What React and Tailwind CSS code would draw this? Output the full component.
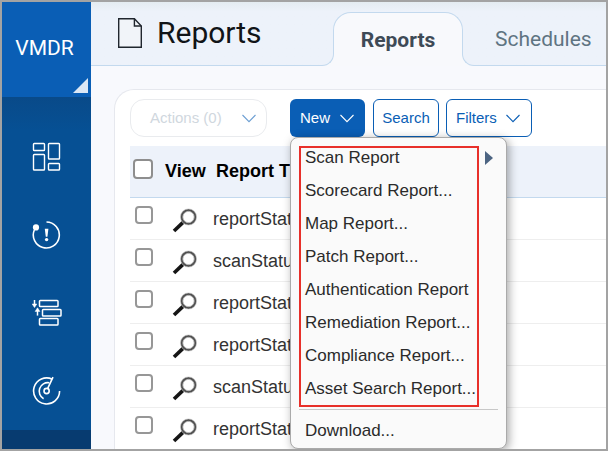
import React from "react";

const sans = "font-['Liberation_Sans',Arial,sans-serif]";

const menuItems = [
  "Scan Report",
  "Scorecard Report...",
  "Map Report...",
  "Patch Report...",
  "Authentication Report",
  "Remediation Report...",
  "Compliance Report...",
  "Asset Search Report...",
];

const rows = [
  "reportStatus",
  "scanStatus",
  "reportStatus",
  "reportStatus",
  "scanStatus",
  "reportStatus",
];

function Chevron({ className }) {
  return (
    <svg className={className} width="14" height="9" viewBox="0 0 14 9" fill="none" stroke="currentColor" strokeWidth="1.1">
      <path d="M0.5 1 L7 7.6 L13.5 1" />
    </svg>
  );
}

function DashboardIcon() {
  return (
    <svg width="30" height="30" viewBox="0 0 30 30" fill="none" stroke="white" strokeWidth="1.4">
      <rect x="1.5" y="1.5" width="11" height="7" rx="0.8" />
      <rect x="1.5" y="12.5" width="11" height="15.5" rx="0.8" />
      <rect x="16.5" y="1.5" width="11" height="15.5" rx="0.8" />
      <rect x="16.5" y="21.5" width="11" height="6.5" rx="0.8" />
    </svg>
  );
}

function AlertIcon() {
  return (
    <svg width="30" height="30" viewBox="0 0 30 30" fill="none" stroke="white" strokeWidth="1.6">
      <path d="M14.5 2 A13 13 0 1 1 2.3 10" />
      <circle cx="4" cy="7.4" r="3.1" fill="white" stroke="none" />
      <path d="M12.8 8.8 H16.4 L15.4 16.8 H13.8 Z" fill="white" stroke="none" />
      <circle cx="14.6" cy="19.6" r="1.7" fill="white" stroke="none" />
    </svg>
  );
}

function PriorityIcon() {
  return (
    <svg width="30" height="30" viewBox="0 0 30 30" fill="none" stroke="white" strokeWidth="1.5">
      <rect x="7.5" y="2.5" width="18.5" height="6" rx="0.8" />
      <rect x="10.5" y="11.5" width="18.5" height="6.5" rx="0.8" />
      <rect x="7.5" y="20.5" width="18.5" height="6.5" rx="0.8" />
      <path d="M2.5 2 V7" />
      <path d="M0.2 6 H4.8 L2.5 9.6 Z" fill="white" stroke="white" strokeWidth="0.5" />
      <path d="M5.5 17.6 V13" />
      <path d="M3.1 13.4 H7.9 L5.5 9.8 Z" fill="white" stroke="white" strokeWidth="0.5" />
    </svg>
  );
}

function GaugeIcon() {
  return (
    <svg width="30" height="30" viewBox="0 0 30 30" fill="none" stroke="white" strokeWidth="1.6">
      <path d="M20.2 3.2 A13 13 0 1 0 27.6 15" />
      <path d="M17.2 6.8 A8.6 8.6 0 0 0 11.6 22.8" />
      <circle cx="14.6" cy="15" r="2.6" />
      <path d="M15.6 12.6 L21 1.2" />
    </svg>
  );
}

function Magnifier() {
  return (
    <svg width="26" height="26" viewBox="0 0 26 26" fill="none">
      <path d="M2 24 L11 15.4" stroke="#151515" strokeWidth="3.6" />
      <circle cx="16.5" cy="10" r="6.8" stroke="#505050" strokeWidth="2.4" />
      <circle cx="16.5" cy="10" r="5.6" stroke="#c4c4c4" strokeWidth="0.9" />
      <circle cx="16.5" cy="10" r="8.1" stroke="#c4c4c4" strokeWidth="0.6" />
    </svg>
  );
}

const navItems = [
  ["Dashboard", DashboardIcon],
  ["Vulnerabilities", AlertIcon],
  ["Prioritization", PriorityIcon],
  ["Scans", GaugeIcon],
];

function Sidebar() {
  return (
    <aside className="flex w-[89px] shrink-0 flex-col bg-[#065094]">
      <button className="flex h-[95px] shrink-0 flex-col items-end justify-end bg-[#0a5eb5] text-white">
        <span className="w-full flex-1 pt-8 pr-1 text-center font-[Roboto,sans-serif] text-[21px] leading-[28px]">VMDR</span>
        <svg className="mr-[3px] mb-1" width="15" height="15" viewBox="0 0 15 15">
          <path d="M15 0 V15 H0 Z" fill="#dbe7f5" />
        </svg>
      </button>
      <nav className="flex flex-col bg-linear-to-b from-[#094a89] to-[#065094] to-10% pt-[21px]">
        {navItems.map(([label, Icon]) => (
          <button key={label} aria-label={label} className="flex h-[78px] items-center justify-center">
            <Icon />
          </button>
        ))}
      </nav>
      <div className="flex-1 bg-[#073b70]" />
    </aside>
  );
}

function Header() {
  return (
    <header className="flex h-16 shrink-0 items-end border-b border-[#c3d9ee] bg-linear-to-b from-[#e4ecf1] to-[#edf2fa] to-15%">
      <div className="flex w-[242px] shrink-0 items-center gap-[15px] self-start pt-3 pl-[27px]">
        <svg width="24" height="30" viewBox="0 0 24 30" fill="none" stroke="#20262e" strokeWidth="1.4">
          <path d="M0.7 0.7 H16.4 L23.3 8 V29.3 H0.7 Z" fill="#f1f4f9" />
          <path d="M16.4 0.7 V8 H23.3" />
        </svg>
        <h1 className="font-[Roboto,sans-serif] text-[30px] leading-[38px] text-[#111417]">Reports</h1>
      </div>
      <nav className="flex items-end font-[Roboto,sans-serif] text-[21px]">
        <button className="relative -mb-px h-[54px] w-[130px] shrink-0 rounded-t-[18px] border border-b-0 border-[#c3d9ee] bg-[#f8f9fc] pt-[2px] font-bold text-[#3e4a56]">
          Reports
          <span className="absolute -left-3 bottom-0 h-4 w-3 bg-[#f8f9fc]">
            <span className="block h-full w-full rounded-br-[12px] border-r border-b border-[#c3d9ee] bg-[#edf2fa]" />
          </span>
          <span className="absolute -right-3 bottom-0 h-4 w-3 bg-[#f8f9fc]">
            <span className="block h-full w-full rounded-bl-[12px] border-b border-l border-[#c3d9ee] bg-[#edf2fa]" />
          </span>
        </button>
        <button className="h-[54px] pt-[3px] pl-8 text-[#5f7482]">Schedules</button>
      </nav>
    </header>
  );
}

function NewMenu() {
  return (
    <div className="absolute top-full left-0 z-10 flex h-[312px] w-[217px] flex-col rounded-lg border border-[#aaaaaa] bg-[#fafafa] pt-[3px] text-[17px] text-[#2b2b2b] shadow-[2px_2px_10px_rgba(0,0,0,0.35)]">
      {menuItems.map((item, i) => (
        <button key={item} className="flex h-[33px] shrink-0 items-center justify-between pr-[13px] pl-[14px] whitespace-nowrap">
          {item}
          {i === 0 && (
            <svg width="8" height="14" viewBox="0 0 8 14">
              <path d="M0 0 L8 7 L0 14 Z" fill="#4c6482" />
            </svg>
          )}
        </button>
      ))}
      <hr className="mx-2 mt-1 border-[#c8c8c8]" />
      <button className="flex flex-1 items-center pt-[3px] pl-[14px]">Download...</button>
      <div className="pointer-events-none absolute top-2 left-2 h-[261px] w-[180px] border-2 border-[#e8302a]" />
    </div>
  );
}

function Toolbar() {
  return (
    <div className="flex h-[38px] shrink-0 text-[15px] text-[#0a5eb5]">
      <button disabled className="mr-[23px] flex w-[137px] items-center justify-between rounded-[14px] border border-[#e9ebee] pr-[10px] pl-[19px] text-[#d0d7de]">
        Actions (0)
        <Chevron className="text-[#6d9fd3]" />
      </button>
      <div className="relative mr-2 flex">
        <button className="flex w-[75px] items-center justify-between rounded-[6px] bg-[#0a5eb5] pr-[11px] pl-[10px] text-white">
          New
          <Chevron />
        </button>
        <NewMenu />
      </div>
      <button className="mr-[7px] w-[66px] rounded-[6px] border border-[#0a5eb5] bg-white">Search</button>
      <button className="flex w-[86px] items-center justify-between rounded-[6px] border border-[#0a5eb5] bg-white pr-[11px] pl-[9px]">
        Filters
        <Chevron />
      </button>
    </div>
  );
}

function ReportsTable() {
  return (
    <table className="mt-[9px] w-full table-fixed border-collapse text-left text-[18px] whitespace-nowrap text-[#333333]">
      <colgroup>
        <col className="w-[35px]" />
        <col className="w-[48px]" />
        <col />
      </colgroup>
      <thead>
        <tr className="h-[51px] border-b border-[#c3d9ee] bg-[#edf2fa] text-black">
          <th className="pb-1 pl-[3px]">
            <input type="checkbox" aria-label="Select all" className="block size-5 appearance-none rounded-[4px] border-2 border-[#8e8e8e] bg-white" />
          </th>
          <th>View</th>
          <th className="pl-[3px]">Report Title</th>
        </tr>
      </thead>
      <tbody>
        {rows.map((name, i) => (
          <tr key={i} className="h-[42px] border-b border-[#eeeeee]">
            <td className="pt-2 pl-[5px] align-top">
              <input type="checkbox" aria-label={"Select " + name} className="block size-[18px] appearance-none rounded-[4px] border-2 border-[#979797] bg-white" />
            </td>
            <td className="pt-1 pl-[7px]">
              <button aria-label={"View " + name} className="block">
                <Magnifier />
              </button>
            </td>
            <td className="pt-[2px]">{name}</td>
          </tr>
        ))}
      </tbody>
    </table>
  );
}

export default function App() {
  return (
    <div className={"flex h-screen overflow-hidden border-2 border-[#a3a3a3] bg-[#f8f9fd] " + sans}>
      <Sidebar />
      <div className="flex min-w-0 flex-1 flex-col">
        <Header />
        <main className="mt-[23px] ml-[23px] flex min-w-0 flex-1 flex-col rounded-tl-[20px] border-t border-l border-[#e6e8ee] bg-white pt-[9px] pl-[15px]">
          <Toolbar />
          <ReportsTable />
        </main>
      </div>
    </div>
  );
}
